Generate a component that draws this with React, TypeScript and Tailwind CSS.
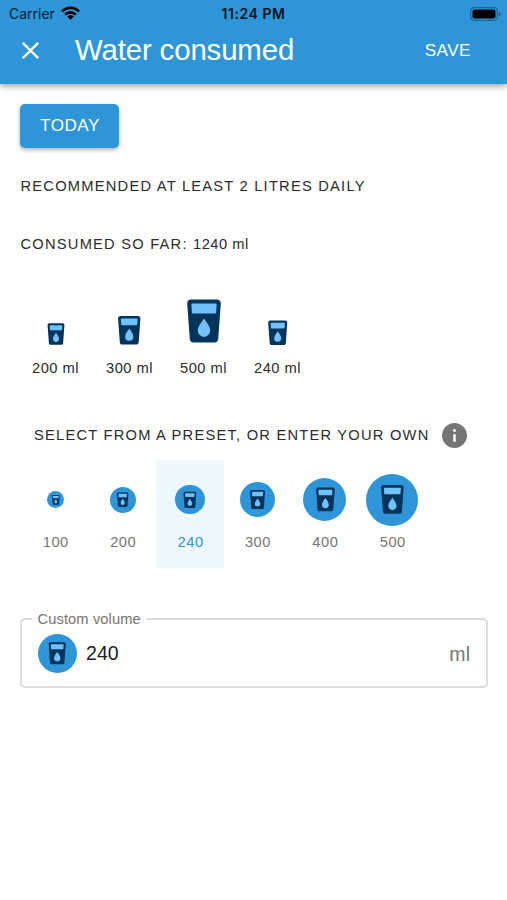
import { useState } from "react"

interface GlassProps {
  size: number
}

// icon size grows with the volume
const sizes: Record<number, number> = {
  100: 17.5,
  200: 26,
  240: 29.5,
  300: 34.5,
  400: 43,
  500: 52,
}

const consumed = [200, 300, 500, 240]
const presets = [100, 200, 240, 300, 400, 500]

function Glass({ size }: GlassProps) {
  return (
    <svg width={size} height={size} viewBox="0 0 52 52">
      <path
        d="M12.800 4.500h26.400c2.200 0 3.800 1.800 3.600 4l-2.600 35.800c-.2 1.900-1.600 3.200-3.500 3.200H15.300c-1.900 0-3.300-1.300-3.500-3.200L9.200 8.500c-.2-2.200 1.400-4 3.600-4z"
        fill="#04345c"
      />
      <path d="M14.300 8.400h23.400q1 0 .9 1l-.5 8q-.1 1-1.100 1H15q-1 0-1.100-1l-.5-8q-.1-1 .9-1z" fill="#70c1fc" />
      <path d="M26 23.500c2.600 3.800 6.200 8 6.200 12.200a6.200 6.200 0 0 1-12.400 0c0-4.200 3.600-8.400 6.200-12.200z" fill="#70c1fc" />
    </svg>
  )
}

function GlassBadge({ size }: GlassProps) {
  return (
    <span
      className="flex items-center justify-center rounded-full bg-[#2e96d8]"
      style={{ width: size, height: size }}
    >
      <Glass size={size * 0.67} />
    </span>
  )
}

function StatusBar() {
  return (
    <div className="grid h-7 grid-cols-3 items-center pb-[1px] pl-[9px] pr-[6px] font-['Inter',sans-serif] text-[14px] text-[#06202f]">
      <div className="flex items-center gap-[6px]">
        <span>Carrier</span>
        <svg className="-mt-[1px]" width="19" height="14" viewBox="0 0 19 14" fill="none" stroke="#000" strokeWidth="2.700">
          <path d="M1.100 5.200a12 12 0 0 1 16.800 0" />
          <path d="M4.200 8.600a7.600 7.600 0 0 1 10.600 0" />
          <path d="M9.500 13.800 6.200 10.500a4.800 4.800 0 0 1 6.600 0z" fill="#000" stroke="none" />
        </svg>
      </div>
      <span className="-ml-[3px] text-center font-semibold tracking-[0.55px] text-[#041420]">11:24 PM</span>
      <svg className="justify-self-end" width="31" height="14" viewBox="0 0 31 14">
        <rect x="0.700" y="0.700" width="26.600" height="12.600" rx="3.600" fill="none" stroke="#1d668f" strokeWidth="1.200" />
        <rect x="2.500" y="2.500" width="23" height="9" rx="2" fill="#000" />
        <path d="M28.800 4.800c1.400.5 1.700 1.300 1.700 2.200s-.3 1.700-1.700 2.200z" fill="#1d668f" />
      </svg>
    </div>
  )
}

export default function App() {
  const [selected, setSelected] = useState(240)

  return (
    <div className="min-h-[900px] w-[507px] bg-white font-['Liberation_Sans',Arial,sans-serif] text-[#2b2b2b]">
      <header className="h-[84px] bg-[#2e96d8] shadow-[0_2px_5px_rgba(0,0,0,0.3),0_5px_8px_rgba(0,0,0,0.08)]">
        <StatusBar />
        <div className="flex h-11 items-center pl-[22px] pr-[36px] text-white">
          <svg width="17" height="17" viewBox="0 0 17 17" stroke="#fff" strokeWidth="2.300">
            <path d="M.8.8l15.400 15.400M16.200.8.8 16.200" />
          </svg>
          <h1 className="ml-[36px] flex-1 text-[29.4px] leading-[44px] tracking-[-0.14px]">Water consumed</h1>
          <button className="pt-[1px] text-[17.1px] tracking-[0.49px]">SAVE</button>
        </div>
      </header>

      <main className="px-5 pt-5">
        <button className="block h-11 w-[99px] rounded-[5px] bg-[#2e96d8] pl-[1px] text-[17.1px] tracking-[0.49px] text-white shadow-[0_2px_4px_rgba(0,0,0,0.3)]">
          TODAY
        </button>
        <p className="ml-[0.5px] mt-[26px] text-[14.7px] leading-6 tracking-[1.22px]">RECOMMENDED AT LEAST 2 LITRES DAILY</p>
        <p className="ml-[0.5px] mt-[34px] text-[14.7px] leading-6 tracking-[1.22px]">
          CONSUMED SO FAR: <span className="tracking-[0.49px]">1240 ml</span>
        </p>

        <div className="-ml-[1.5px] mt-[38px] flex">
          {consumed.map((volume) => (
            <div key={volume} className="flex w-[74px] flex-col items-center">
              <div className="flex h-[53px] items-end">
                <Glass size={sizes[volume]} />
              </div>
              <span className="mt-[9px] text-[14.7px] leading-6 tracking-[0.49px]">{volume} ml</span>
            </div>
          ))}
        </div>

        <div className="mt-[42px] flex h-[26px] items-center pl-[14px]">
          <span className="text-[14.7px] tracking-[1.22px]">SELECT FROM A PRESET, OR ENTER YOUR OWN</span>
          <svg className="ml-[12px]" width="25" height="25" viewBox="2 2 20 20" fill="#757575">
            <path d="M12 2C6.480 2 2 6.480 2 12s4.480 10 10 10 10-4.480 10-10S17.520 2 12 2zm1 15h-2v-6h2v6zm0-8h-2V7h2v2z" />
          </svg>
        </div>

        <div className="ml-[1.7px] mt-[12px] flex">
          {presets.map((volume) => (
            <button
              key={volume}
              onClick={() => setSelected(volume)}
              className={
                volume === selected
                  ? "flex h-[108px] w-[67.4px] flex-col items-center bg-[#eef7fc] text-[#2e96d8]"
                  : "flex h-[108px] w-[67.4px] flex-col items-center text-[#757575]"
              }
            >
              <span className="flex h-[79px] items-center">
                <GlassBadge size={sizes[volume]} />
              </span>
              <span className="-mt-[9px] pl-[0.8px] text-[14.7px] leading-6 tracking-[0.49px]">{volume}</span>
            </button>
          ))}
        </div>

        <fieldset className="mt-[42px] h-[78px] w-[468px] rounded-[5px] border-2 border-[#dcdcdc] pl-[9.5px] pr-[16px]">
          <legend className="px-[6px] text-[14.7px] leading-[18px] tracking-[0.1px] text-[#757575]">Custom volume</legend>
          <div className="flex h-[51px] items-center pl-[6px]">
            <GlassBadge size={39.5} />
            <span className="ml-[9px] flex-1 pt-[1px] text-[19.6px] text-[#212121]">{selected}</span>
            <span className="pt-[2px] text-[19.6px] text-[#757575]">ml</span>
          </div>
        </fieldset>
      </main>
    </div>
  )
}
